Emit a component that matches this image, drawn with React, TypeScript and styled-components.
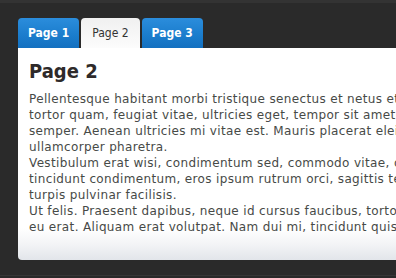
import React, { useState } from "react";
import styled, { createGlobalStyle } from "styled-components";

const Global = createGlobalStyle`
  html, body { margin: 0; padding: 0; background: #2a2a2a; }
  body { overflow: hidden; }
`;

const Frame = styled.div`
  width: 396px;
  height: 278px;
  box-sizing: border-box;
  overflow: hidden;
  padding: 18px 0 0 18px;
  background: linear-gradient(
    to bottom,
    #333333 0,
    #333333 3px,
    #2a2a2a 3px,
    #2a2a2a 275px,
    #363636 275px,
    #363636 276px,
    #292929 276px
  );
  font-family: "DejaVu Sans", Verdana, sans-serif;
`;

const TabBar = styled.div`
  display: flex;
  gap: 2px;
  height: 30px;
`;

const Tab = styled.button<{ $active: boolean }>`
  border: none;
  margin: 0;
  height: 30px;
  padding: 0 ${(p) => (p.$active ? "11px" : "10px")};
  border-radius: 4px 4px 0 0;
  font-family: "DejaVu Sans Condensed", "DejaVu Sans", sans-serif;
  font-size: 12px;
  line-height: 30px;
  cursor: pointer;
  font-weight: ${(p) => (p.$active ? "normal" : "bold")};
  color: ${(p) => (p.$active ? "#333333" : "#ffffff")};
  background: ${(p) =>
    p.$active
      ? "linear-gradient(to bottom, #f0f0f0 0%, #fcfcfc 100%)"
      : "linear-gradient(to bottom, #2b8ddc 0%, #1a7ccc 60%, #1370c0 100%)"};
`;

const Panel = styled.div`
  width: 560px;
  height: 212px;
  box-sizing: border-box;
  padding: 11px 0 0 11px;
  border-radius: 0 0 0 4px;
  background: linear-gradient(
    to bottom,
    #ffffff 0,
    #ffffff 180px,
    #f3f4f6 196px,
    #e2e5ea 212px
  );
`;

const Heading = styled.h2`
  margin: 0 0 8px;
  font-family: "DejaVu Sans Condensed", "DejaVu Sans", sans-serif;
  font-weight: bold;
  font-size: 20px;
  line-height: 24px;
  color: #2e2a2a;
`;

const Para = styled.p`
  margin: 0;
  font-size: 12px;
  line-height: 16px;
  letter-spacing: 0.35px;
  color: #474a47;
  white-space: nowrap;
`;

const pages: Record<number, string[][]> = {
  2: [
    [
      "Pellentesque habitant morbi tristique senectus et netus et malesuada fames ac turpis egestas. Vestibulum",
      "tortor quam, feugiat vitae, ultricies eget, tempor sit amet, ante. Donec eu libero sit amet quam egestas",
      "semper. Aenean ultricies mi vitae est. Mauris placerat eleifend leo. Quisque sit amet est et sapien",
      "ullamcorper pharetra.",
    ],
    [
      "Vestibulum erat wisi, condimentum sed, commodo vitae, ornare sit amet, wisi. Aenean fermentum, elit eget",
      "tincidunt condimentum, eros ipsum rutrum orci, sagittis tempus lacus enim ac dui. Donec non enim in",
      "turpis pulvinar facilisis.",
    ],
    [
      "Ut felis. Praesent dapibus, neque id cursus faucibus, tortor neque egestas augue, eu vulputate magna eros",
      "eu erat. Aliquam erat volutpat. Nam dui mi, tincidunt quis, accumsan porttitor, facilisis luctus, metus",
    ],
  ],
};

export default function App() {
  const [active, setActive] = useState(2);
  const content = pages[2];
  return (
    <>
      <Global />
      <Frame>
        <TabBar>
          {[1, 2, 3].map((n) => (
            <Tab key={n} $active={n === active} onClick={() => setActive(n)}>
              Page {n}
            </Tab>
          ))}
        </TabBar>
        <Panel>
          <Heading>Page {active}</Heading>
          {content.map((lines, i) => (
            <Para key={i}>
              {lines.map((l, j) => (
                <React.Fragment key={j}>
                  {l}
                  {j < lines.length - 1 && <br />}
                </React.Fragment>
              ))}
            </Para>
          ))}
        </Panel>
      </Frame>
    </>
  );
}
